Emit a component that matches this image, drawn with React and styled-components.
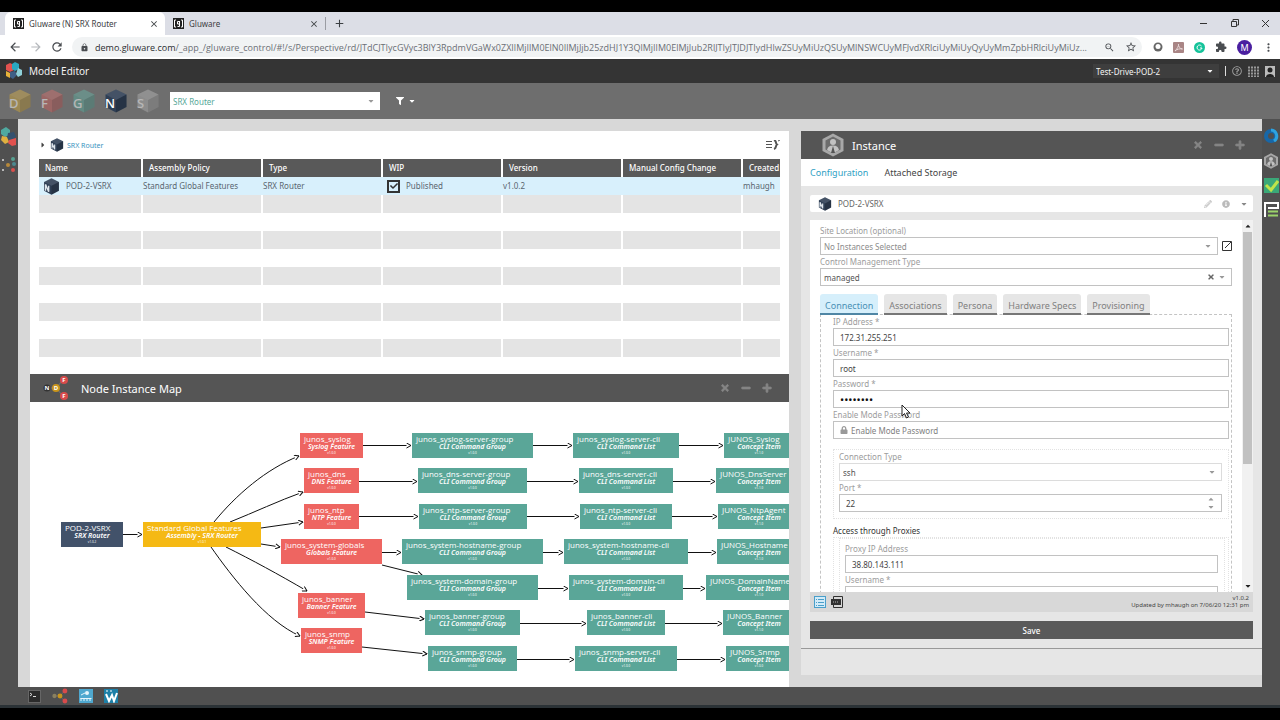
import React from 'react';
import styled, { createGlobalStyle, css } from 'styled-components';
import {
   MdArrowBack, MdArrowForward, MdRefresh, MdLock, MdZoomOut, MdStarBorder, MdMoreVert,
   MdExtension, MdClose, MdAdd,
} from 'react-icons/md';
import {
   FaFilter, FaCaretDown, FaCaretUp, FaCaretRight, FaTimes, FaMinus, FaPlus, FaLock, FaCheck,
   FaRegQuestionCircle, FaInfoCircle, FaPencilAlt,
} from 'react-icons/fa';

const colors = {
   navy: '#42526a',
   yellow: '#f5b914',
   red: '#ee6561',
   teal: '#5aa698',
   dark: '#555555',
   rail: '#505050',
   blue: '#2f9fc4',
};

const URL_PATH = '/_app_/gluware_control/#!/s/Perspective/rd/JTdCJTIycGVyc3BlY3RpdmVGaWx0ZXIlMjIlM0ElN0IlMjJjb25zdHJ1Y3QlMjIlM0ElMjJub2RlJTIyJTJDJTIydHlwZSUyMiUzQSUyMlNSWCUyMFJvdXRlciUyMiUyQyUyMmZpbHRlciUyMiUz...';

const columns = ['Name', 'Assembly Policy', 'Type', 'WIP', 'Version', 'Manual Config Change', 'Created'];

const cubes = [
   { letter: 'D', color: '#c9a23c', faded: true },
   { letter: 'F', color: '#c9605e', faded: true },
   { letter: 'G', color: '#5aa698', faded: true },
   { letter: 'N', color: '#2f3f55', faded: false },
   { letter: 'S', color: '#aaaaaa', faded: true },
];

// x and y are canvas coordinates of the node's top left corner
const nodes = [
   { x: 31, y: 120, w: 62, kind: 'navy', name: 'POD-2-VSRX', type: 'SRX Router', version: 'v1.0.2' },
   { x: 113, y: 120, w: 118, kind: 'yellow', name: 'Standard Global Features', type: 'Assembly - SRX Router', version: 'v1.0.1' },
   { x: 270, y: 31, w: 63, kind: 'red', name: 'junos_syslog', type: 'Syslog Feature' },
   { x: 274, y: 66, w: 55, kind: 'red', name: 'junos_dns', type: 'DNS Feature' },
   { x: 274, y: 102, w: 55, kind: 'red', name: 'junos_ntp', type: 'NTP Feature' },
   { x: 251, y: 137, w: 101, kind: 'red', name: 'junos_system-globals', type: 'Globals Feature' },
   { x: 268, y: 191, w: 67, kind: 'red', name: 'junos_banner', type: 'Banner Feature' },
   { x: 271, y: 226, w: 61, kind: 'red', name: 'junos_snmp', type: 'SNMP Feature' },
   { x: 382, y: 31, w: 121, kind: 'teal', name: 'junos_syslog-server-group', type: 'CLI Command Group' },
   { x: 388, y: 66, w: 109, kind: 'teal', name: 'junos_dns-server-group', type: 'CLI Command Group' },
   { x: 389, y: 102, w: 108, kind: 'teal', name: 'junos_ntp-server-group', type: 'CLI Command Group' },
   { x: 372, y: 137, w: 141, kind: 'teal', name: 'junos_system-hostname-group', type: 'CLI Command Group' },
   { x: 377, y: 173, w: 131, kind: 'teal', name: 'junos_system-domain-group', type: 'CLI Command Group' },
   { x: 395, y: 208, w: 95, kind: 'teal', name: 'junos_banner-group', type: 'CLI Command Group' },
   { x: 398, y: 244, w: 89, kind: 'teal', name: 'junos_snmp-group', type: 'CLI Command Group' },
   { x: 543, y: 31, w: 106, kind: 'teal', name: 'junos_syslog-server-cli', type: 'CLI Command List' },
   { x: 549, y: 66, w: 94, kind: 'teal', name: 'junos_dns-server-cli', type: 'CLI Command List' },
   { x: 550, y: 102, w: 92, kind: 'teal', name: 'junos_ntp-server-cli', type: 'CLI Command List' },
   { x: 534, y: 137, w: 124, kind: 'teal', name: 'junos_system-hostname-cli', type: 'CLI Command List' },
   { x: 539, y: 173, w: 114, kind: 'teal', name: 'junos_system-domain-cli', type: 'CLI Command List' },
   { x: 557, y: 208, w: 78, kind: 'teal', name: 'junos_banner-cli', type: 'CLI Command List' },
   { x: 545, y: 244, w: 102, kind: 'teal', name: 'junos_snmp-server-cli', type: 'CLI Command List' },
   { x: 694, y: 31, w: 70, kind: 'teal', name: 'JUNOS_Syslog', type: 'Concept Item', version: 'v1.1.0' },
   { x: 686, y: 66, w: 86, kind: 'teal', name: 'JUNOS_DnsServer', type: 'Concept Item', version: 'v1.1.0' },
   { x: 688, y: 102, w: 82, kind: 'teal', name: 'JUNOS_NtpAgent', type: 'Concept Item', version: 'v1.1.0' },
   { x: 687, y: 137, w: 84, kind: 'teal', name: 'JUNOS_Hostname', type: 'Concept Item', version: 'v1.1.0' },
   { x: 676, y: 173, w: 106, kind: 'teal', name: 'JUNOS_DomainName', type: 'Concept Item', version: 'v1.1.0' },
   { x: 693, y: 208, w: 72, kind: 'teal', name: 'JUNOS_Banner', type: 'Concept Item', version: 'v1.1.0' },
   { x: 696, y: 244, w: 66, kind: 'teal', name: 'JUNOS_Snmp', type: 'Concept Item', version: 'v1.0.0' },
];

const edges = [
   'M93 132.5H112',
   'M184 120C206 93 236 67 269 54',
   'M200 120C225 110 248 99 273 90',
   'M231 126L273 120',
   'M231 142L250 145',
   'M196 145C222 158 248 172 277 189',
   'M181 145C202 175 236 219 270 234',
   'M333 43.5H381', 'M329 79.5H387', 'M329 114.5H388', 'M352 150.5H371',
   'M352 163L392 173', 'M335 210L394 217', 'M332 245L397 252',
   'M503 43.5H542', 'M497 79.5H548', 'M497 114.5H549', 'M513 150.5H533', 'M508 186.5H538', 'M490 221.5H556', 'M487 257.5H544',
   'M649 43.5H693', 'M643 79.5H685', 'M642 114.5H687', 'M658 150.5H686', 'M653 186.5H675', 'M635 221.5H692', 'M647 257.5H695',
];

const Cube = ({ size = 14, color = '#2f3f55', letter }) => (
   <svg width={size} height={size} viewBox="0 0 24 24" aria-hidden="true">
      <path d="M12 0.5L22.5 5.5V18L12 23.5L1.5 18V5.5Z" fill={color} />
      <path d="M12 0.5L22.5 5.5L12 11L1.5 5.5Z" fill="#fff" opacity="0.1" />
      <path d="M12 11L22.5 5.5V18L12 23.5Z" fill="#000" opacity="0.18" />
      {letter
         ? <text x="1" y="19" fill="#fff" fontSize="13" fontWeight="500" fontFamily="Noto Sans, sans-serif">{letter}</text>
         : <path d="M3.5 18V9L8 19.5V11" stroke="#dfe6ec" strokeWidth="2" fill="none" />}
   </svg>
);

const Favicon = () => (
   <svg width="11" height="11" viewBox="0 0 11 11" aria-hidden="true">
      <rect width="11" height="11" fill="#222" />
      <path d="M3 2H1.5V9H3M8 2H9.5V9H8M6.5 3.5H4.5V6H6.5M6.5 3V8.5H4.5" stroke="#fff" fill="none" />
   </svg>
);

const Logo = ({ size = 18 }) => (
   <svg width={size} height={size} viewBox="0 0 18 18" aria-hidden="true">
      <path d="M5 1L9 3V8L5 10L1 8V3Z" fill="#e2524f" />
      <path d="M10 0L14 2V7L10 9L7 7V2Z" fill="#2aa7c0" />
      <path d="M1 9L5 11V16L1 14Z" fill="#e8b23a" />
      <path d="M5 10L10 9L12 13L8 17L5 15Z" fill="#3f5f86" />
      <path d="M13 6L17 8V13L13 15L11 12Z" fill="#8fd0d8" />
   </svg>
);

const Person = ({ size }) => (
   <svg width={size} height={size} viewBox="0 0 24 24" aria-hidden="true">
      <path d="M12 0.5L22.5 6V18L12 23.5L1.5 18V6Z" fill="#a8a8a8" />
      <path d="M12 3.5L19.5 7.5V16.5L12 20.5L4.5 16.5V7.5Z" fill="#6c6c6c" />
      <circle cx="12" cy="9" r="3" fill="#c2c2c2" />
      <path d="M6 17C7 13 10 12.5 12 12.5S17 13 18 17L12 20.5Z" fill="#c2c2c2" />
      <path d="M12 13L14 20H10Z" fill="#555" />
   </svg>
);

const MapIcon = ({ size = 24, letters }) => (
   <svg width={size} height={size} viewBox="0 0 26 26" aria-hidden="true">
      <path d="M4 13H13L20 5M13 13L20 21" stroke="#777" fill="none" />
      <circle cx="4" cy="13" r="3.5" fill={letters ? '#333' : '#8a8060'} />
      <circle cx="13" cy="13" r="4" fill="#c8941c" />
      <circle cx="21" cy="5" r="4" fill="#d84b4b" />
      <circle cx="21" cy="21" r="4" fill="#d84b4b" />
      {letters && (
         <g fill="#fff" fontSize="6" fontWeight="700" fontFamily="Noto Sans, sans-serif" textAnchor="middle">
            <text x="4" y="15">N</text>
            <text x="13" y="15">D</text>
            <text x="21" y="7">F</text>
            <text x="21" y="23">F</text>
         </g>
      )}
   </svg>
);

const WindowButtons = () => (
   <PanelActions>
      <BareButton aria-label="Close"><FaTimes /></BareButton>
      <BareButton aria-label="Collapse"><FaMinus /></BareButton>
      <BareButton aria-label="Expand"><FaPlus /></BareButton>
   </PanelActions>
);

const Field = ({ id, label, value, type = 'text', children }) => (
   <FieldWrapper>
      <FieldLabel htmlFor={id}>{label}</FieldLabel>
      <Control $indent>
         {children || <TextInput id={id} type={type} defaultValue={value} />}
      </Control>
   </FieldWrapper>
);

const Browser = () => (
   <>
      <TabStrip>
         <BrowserTab $active>
            <Favicon />
            <TabTitle>Gluware (N) SRX Router</TabTitle>
            <BareButton aria-label="Close tab"><MdClose size={10} /></BareButton>
         </BrowserTab>
         <BrowserTab>
            <Favicon />
            <TabTitle>Gluware</TabTitle>
            <BareButton aria-label="Close tab"><MdClose size={10} /></BareButton>
         </BrowserTab>
         <NewTab aria-label="New tab"><MdAdd size={13} /></NewTab>
         <WindowControls>
            <BareButton aria-label="Minimize">
               <svg width="9" height="9"><path d="M1 4.5H8" stroke="#333" /></svg>
            </BareButton>
            <BareButton aria-label="Restore">
               <svg width="9" height="9" fill="none" stroke="#333"><path d="M1.5 2.5H6.5V7.5H1.5ZM3 2V0.5H8.5V6H7" /></svg>
            </BareButton>
            <BareButton aria-label="Close">
               <svg width="9" height="9"><path d="M1 1L8 8M8 1L1 8" stroke="#333" /></svg>
            </BareButton>
         </WindowControls>
      </TabStrip>
      <AddressRow>
         <BareButton aria-label="Back"><MdArrowBack size={14} /></BareButton>
         <BareButton aria-label="Forward"><MdArrowForward size={14} color="#b5b8bc" /></BareButton>
         <BareButton aria-label="Reload"><MdRefresh size={14} /></BareButton>
         <AddressBar>
            <MdLock size={9} />
            <Address><b>demo.gluware.com</b>{URL_PATH}</Address>
            <MdZoomOut size={11} />
            <MdStarBorder size={12} />
         </AddressBar>
         <Extensions>
            <svg width="10" height="10"><circle cx="5" cy="5" r="4.5" fill="#666" /><circle cx="5" cy="4.5" r="2.5" fill="#fff" /></svg>
            <svg width="11" height="11"><rect width="11" height="11" rx="1" fill="#a98585" /><path d="M2 9C4 7 6 4 5.5 2C5 4 7 7 9.5 7C7 6.5 4 7 2 9Z" stroke="#e9dada" fill="none" /></svg>
            <svg width="11" height="11"><circle cx="5.5" cy="5.5" r="5.5" fill="#15c39a" /><path d="M7.5 4A2.5 2.5 0 1 0 8 6H6" stroke="#fff" fill="none" /></svg>
            <MdExtension size={12} />
            <Avatar>M</Avatar>
            <MdMoreVert size={13} />
         </Extensions>
      </AddressRow>
   </>
);

const AppBar = () => (
   <>
      <Header>
         <Logo />
         <AppTitle>Model Editor</AppTitle>
         <PodPicker>
            <select aria-label="Organization" defaultValue="Test-Drive-POD-2"><option>Test-Drive-POD-2</option></select>
            <FaCaretDown />
         </PodPicker>
         <HeaderDivider />
         <FaRegQuestionCircle size={10} color="#999" />
         <svg width="11" height="11"><path d="M0 1.5H11M0 4.5H11M0 7.5H11M0 10.5H11" stroke="#999" strokeWidth="2" strokeDasharray="2 1" /></svg>
         <svg width="10" height="11"><rect width="10" height="11" fill="#bbb" /><circle cx="5" cy="4" r="2.5" fill="#222" /><path d="M1 11C1 7 9 7 9 11Z" fill="#222" /></svg>
      </Header>
      <Toolbar>
         {cubes.map((cube) => (
            <CubeButton key={cube.letter} aria-label={`Filter ${cube.letter}`} $faded={cube.faded}>
               <Cube size={24} color={cube.color} letter={cube.letter} />
            </CubeButton>
         ))}
         <TypePicker>
            <select aria-label="Type" defaultValue="SRX Router"><option>SRX Router</option></select>
            <FaCaretDown />
         </TypePicker>
         <FilterButton aria-label="Filter"><FaFilter /><FaCaretDown /></FilterButton>
      </Toolbar>
   </>
);

const Instances = () => (
   <TablePanel>
      <Crumb>
         <FaCaretRight size={8} color="#444" />
         <Cube size={14} />
         <a href="#srx">SRX Router</a>
         <BareButton aria-label="Table options">
            <svg width="14" height="10" fill="none" stroke="#555"><path d="M0 1.5H6M0 4.5H6M0 7.5H6" /><path d="M8 0C11 1 9 3 11 4.5C9 6 11 8 8 9" strokeWidth="2" /><path d="M12 1L14 0" /></svg>
         </BareButton>
      </Crumb>
      <TableClip>
         <Table>
            <colgroup>
               <NameCol />
               <col span="6" />
            </colgroup>
            <thead>
               <tr>{columns.map((name) => <th key={name}>{name}</th>)}</tr>
            </thead>
            <tbody>
               <SelectedRow>
                  <td><CellInner><Cube size={17} />POD-2-VSRX</CellInner></td>
                  <td>Standard Global Features</td>
                  <td>SRX Router</td>
                  <td>
                     <CellInner>
                        <TickBox>
                           <input type="checkbox" aria-label="Published" defaultChecked />
                           <FaCheck />
                        </TickBox>
                        Published
                     </CellInner>
                  </td>
                  <td>v1.0.2</td>
                  <td />
                  <td>mhaugh</td>
               </SelectedRow>
               {[...Array(9)].map((_, row) => (
                  <tr key={row}>{columns.map((name) => <td key={name} />)}</tr>
               ))}
            </tbody>
         </Table>
      </TableClip>
   </TablePanel>
);

const NodeMap = () => (
   <MapPanel>
      <PanelHeader>
         <MapIcon size={26} letters />
         <PanelTitle>Node Instance Map</PanelTitle>
         <WindowButtons />
      </PanelHeader>
      <Canvas>
         <Edges aria-hidden="true">
            <defs>
               <marker id="head" viewBox="0 0 6 6" refX="5.5" refY="3" markerWidth="6" markerHeight="6" markerUnits="userSpaceOnUse" orient="auto">
                  <path d="M1 0.5L5.5 3L1 5.5" fill="#fff" stroke="#111" />
               </marker>
            </defs>
            {edges.map((d) => <path key={d} d={d} markerEnd="url(#head)" />)}
         </Edges>
         {nodes.map((node) => (
            <Node key={node.name} $x={node.x} $y={node.y} $w={node.w} $kind={node.kind}>
               <NodeName>{node.name}</NodeName>
               <NodeType>{node.type}</NodeType>
               <NodeVersion>{node.version || 'v1.0.0'}</NodeVersion>
            </Node>
         ))}
      </Canvas>
   </MapPanel>
);

const InstancePanel = () => (
   <Inspector>
      <PanelHeader>
         <Person size={24} />
         <PanelTitle>Instance</PanelTitle>
         <WindowButtons />
      </PanelHeader>
      <InspectorTabs>
         <InspectorTab $active>Configuration</InspectorTab>
         <InspectorTab>Attached Storage</InspectorTab>
      </InspectorTabs>
      <InspectorBody>
         <InstanceBar>
            <Cube size={14} />
            <span>POD-2-VSRX</span>
            <FaPencilAlt color="#ccc" />
            <FaInfoCircle color="#bbb" />
            <FaCaretDown color="#888" />
         </InstanceBar>
         <FormArea>
            <Form>
               <FieldLabel htmlFor="site">Site Location (optional)</FieldLabel>
               <SiteRow>
                  <Control>
                     <SelectInput id="site" $muted><option>No Instances Selected</option></SelectInput>
                     <FaCaretDown />
                  </Control>
                  <BareButton type="button" aria-label="Open site">
                     <svg width="10" height="10" fill="none" stroke="#333"><path d="M6 0.5H0.5V9.5H9.5V4M3 7L9 1M6 0.5H9.5V4" /></svg>
                  </BareButton>
               </SiteRow>
               <FieldLabel htmlFor="management">Control Management Type</FieldLabel>
               <Control>
                  <SelectInput id="management"><option>managed</option></SelectInput>
                  <ClearButton type="button" aria-label="Clear"><FaTimes /></ClearButton>
                  <FaCaretDown />
               </Control>
               <FormTabs>
                  <FormTab $active>Connection</FormTab>
                  <FormTab>Associations</FormTab>
                  <FormTab>Persona</FormTab>
                  <FormTab>Hardware Specs</FormTab>
                  <FormTab>Provisioning</FormTab>
               </FormTabs>
               <TabPage>
                  <Field id="ip" label="IP Address *" value="172.31.255.251" />
                  <Field id="user" label="Username *" value="root" />
                  <Field id="pass" label="Password *">
                     <TextInput id="pass" type="password" defaultValue="password" $dots />
                  </Field>
                  <FieldWrapper>
                     <FieldLabel htmlFor="enable">Enable Mode Password</FieldLabel>
                     <Pointer width="11" height="16" viewBox="0 0 11 16" aria-hidden="true">
                        <path d="M1 1V12L3.5 9.5L5.5 14L7.5 13L5.5 9H9Z" fill="#fff" stroke="#222" />
                     </Pointer>
                     <Control $indent>
                        <FaLock />
                        <TextInput id="enable" type="password" placeholder="Enable Mode Password" />
                     </Control>
                  </FieldWrapper>
                  <Group>
                     <FieldLabel htmlFor="conn">Connection Type</FieldLabel>
                     <Control $light>
                        <SelectInput id="conn"><option>ssh</option></SelectInput>
                        <FaCaretDown />
                     </Control>
                     <Field id="port" label="Port *">
                        <TextInput id="port" type="number" defaultValue="22" />
                        <Spinner><FaCaretUp /><FaCaretDown /></Spinner>
                     </Field>
                  </Group>
                  <GroupTitle>Access through Proxies</GroupTitle>
                  <Group $nested>
                     <Group $inner>
                        <Field id="proxy-ip" label="Proxy IP Address" value="38.80.143.111" />
                        <Field id="proxy-user" label="Username *" value="proxyuser" />
                     </Group>
                  </Group>
               </TabPage>
            </Form>
            <Scrollbar aria-hidden="true">
               <FaCaretUp />
               <Thumb />
               <FaCaretDown />
            </Scrollbar>
         </FormArea>
         <FormFooter>
            <BareButton aria-label="Form view">
               <svg width="12" height="12" fill="#d3ebf8" stroke="#4a9fca"><rect x="0.5" y="0.5" width="11" height="11" /><path d="M2 3.5H10M2 6.5H10M2 9.5H10" strokeDasharray="1 1 6" /></svg>
            </BareButton>
            <BareButton aria-label="JSON view">
               <svg width="12" height="12"><path d="M2.5 3V0.5H11.5V11.5H2.5V9" fill="none" stroke="#333" /><rect y="3" width="10" height="6" fill="#333" /><path d="M2 6H8" stroke="#bbb" strokeDasharray="1 1" /></svg>
            </BareButton>
            <Updated>v1.0.2<br />Updated by mhaugh on 7/06/20 12:31 pm</Updated>
         </FormFooter>
         <SaveButton>Save</SaveButton>
      </InspectorBody>
      <InspectorEnd />
   </Inspector>
);

const App = () => (
   <Page>
      <GlobalStyle />
      <Browser />
      <AppBar />
      <Workspace>
         <Rail>
            <svg width="18" height="20" aria-hidden="true"><path d="M1 3L6 0L10 3V8L5 10L1 7Z" fill="#4fa9a0" /><path d="M8 6L14 5L16 10L11 13L7 11Z" fill="#34506e" /><path d="M2 9L7 10L9 15L5 17L1 13Z" fill="#e0b040" /><path d="M9 13L16 11V18L12 19L8 16Z" fill="#e2524f" /></svg>
            <svg width="18" height="18" aria-hidden="true"><circle cx="3" cy="4" r="1" fill="#ddd" /><circle cx="3" cy="14" r="1" fill="#ddd" /><circle cx="8" cy="9" r="2" fill="#b8893a" /><circle cx="13" cy="3" r="2" fill="#56a090" /><circle cx="14" cy="8" r="2" fill="#4d8a90" /><circle cx="13" cy="14" r="2" fill="#d8504d" /></svg>
         </Rail>
         <Main>
            <LeftColumn>
               <Instances />
               <NodeMap />
            </LeftColumn>
            <InstancePanel />
         </Main>
         <Rail $right>
            <svg width="16" height="16"><circle cx="8" cy="8" r="5" fill="none" stroke="#1767a8" strokeWidth="4" /><path d="M8 2A6 6 0 0 1 11 13" fill="none" stroke="#2ea3e0" strokeWidth="3" /></svg>
            <Person size={16} />
            <svg width="15" height="15"><rect width="15" height="15" fill="#3aa878" /><path d="M2 7L7 12L14 3" stroke="#bfe34a" strokeWidth="3" fill="none" /></svg>
            <svg width="15" height="15" fill="none" strokeWidth="2"><path d="M1 15V1H14V6H4" stroke="#fff" /><path d="M4 9.5H14M4 13.5H14" stroke="#9bd36a" /></svg>
         </Rail>
      </Workspace>
      <Dock>
         <svg width="13" height="13"><rect x="0.5" y="0.5" width="12" height="12" fill="#2b2b2b" stroke="#666" /><path d="M2 3L4 4.5L2 6M5 6.5H8" stroke="#ddd" fill="none" /></svg>
         <MapIcon size={16} />
         <svg width="14" height="14"><rect width="14" height="14" fill="#4fa8cf" /><circle cx="8" cy="4" r="2" fill="#e6f5fc" /><path d="M2 6L6 4M1.5 9.5H12.5M2 12V9M5 12V9M8 12V9M11 12V9" stroke="#e6f5fc" /></svg>
         <svg width="14" height="14"><rect width="14" height="14" fill="#1d80a8" /><path d="M2 5L5 12L8 6L10 12L13 4" stroke="#fff" strokeWidth="2" fill="none" /><path d="M2 2H4M6 2H8" stroke="#fff" /></svg>
      </Dock>
      <TaskEdge />
   </Page>
);

export default App;


const GlobalStyle = createGlobalStyle`
   * { box-sizing: border-box; }
   body {
      margin: 0;
      background: #000;
      color: #444;
      font-family: "Noto Sans", "Open Sans", sans-serif;
      font-size: 8px;
   }
   button, input, select { font: inherit; color: inherit; }
   svg { display: block; flex: none; }
   a { color: inherit; text-decoration: none; }
`;

const Page = styled.div`
   height: 100vh;
   padding: 12px 0;
   display: flex;
   flex-direction: column;
   background: #000;
   overflow: hidden;
`;

const BareButton = styled.button`
   padding: 0;
   border: 0;
   background: none;
   display: flex;
   align-items: center;
   justify-content: center;
`;

const bareSelect = css`
   select {
      flex: 1;
      min-width: 0;
      padding: 0;
      border: 0;
      outline: 0;
      appearance: none;
      background: none;
   }
`;

const TabStrip = styled.div`
   flex: none;
   height: 23px;
   padding-left: 5px;
   display: flex;
   align-items: stretch;
   background: #dcdee6;
   color: #3c4043;
`;

const BrowserTab = styled.div`
   width: 160px;
   padding: 0 6px 0 8px;
   display: flex;
   align-items: center;
   gap: 5px;
   border-radius: 6px 6px 0 0;
   background: ${(props) => (props.$active ? '#fff' : 'transparent')};
`;

const TabTitle = styled.span`
   flex: 1;
`;

const NewTab = styled(BareButton)`
   width: 28px;
   margin: 5px 0;
   border-left: 1px solid #9a9ca3;
`;

const WindowControls = styled.div`
   margin-left: auto;
   padding-right: 10px;
   display: flex;
   gap: 22px;
`;

const AddressRow = styled.div`
   flex: none;
   height: 24px;
   padding: 0 5px 0 8px;
   display: flex;
   align-items: center;
   gap: 7px;
   background: #fff;
   color: #4a4d51;
`;

const AddressBar = styled.div`
   flex: 1;
   min-width: 0;
   height: 20px;
   margin-left: 1px;
   padding: 0 5px 0 8px;
   display: flex;
   align-items: center;
   gap: 10px;
   border-radius: 10px;
   background: #f1f3f4;
`;

const Address = styled.span`
   flex: 1;
   margin-left: -4px;
   overflow: hidden;
   white-space: nowrap;
   font-family: "Open Sans", "Noto Sans", sans-serif;
   font-size: 9px;
   color: #6b6f74;

   b {
      font-weight: 400;
      color: #2b2d30;
   }
`;

const Extensions = styled.div`
   padding-left: 4px;
   display: flex;
   align-items: center;
   gap: 10px;
`;

const Avatar = styled.span`
   width: 15px;
   height: 15px;
   border-radius: 50%;
   background: #4a1fa0;
   color: #fff;
   font-size: 9px;
   line-height: 15px;
   text-align: center;
`;

const Header = styled.header`
   flex: none;
   height: 24px;
   padding: 0 5px;
   display: flex;
   align-items: center;
   gap: 6px;
   background: #343434;
`;

const AppTitle = styled.h1`
   flex: 1;
   margin: 0;
   font-size: 10px;
   font-weight: 400;
   color: #f2f2f2;
`;

const PodPicker = styled.div`
   width: 126px;
   height: 14px;
   padding: 0 5px 0 3px;
   display: flex;
   align-items: center;
   background: #3e3e3e;
   color: #f4f4f4;
   ${bareSelect}
`;

const HeaderDivider = styled.span`
   width: 1px;
   height: 10px;
   background: #ddd;
`;

const Toolbar = styled.div`
   flex: none;
   height: 36px;
   padding: 0 8px;
   display: flex;
   align-items: center;
   gap: 8px;
   background: #6e6e6e;
`;

const CubeButton = styled(BareButton)`
   opacity: ${(props) => (props.$faded ? 0.5 : 1)};
`;

const TypePicker = styled.div`
   width: 210px;
   height: 18px;
   margin-left: 2px;
   padding: 0 5px 0 3px;
   display: flex;
   align-items: center;
   background: #fff;
   color: #999;
   ${bareSelect}

   select {
      color: #56a798;
   }
`;

const FilterButton = styled(BareButton)`
   margin-left: 8px;
   gap: 4px;
   color: #fff;
`;

const Workspace = styled.div`
   flex: 1;
   min-height: 0;
   display: flex;
`;

const Rail = styled.nav`
   flex: none;
   width: 18px;
   padding-top: ${(props) => (props.$right ? 9 : 8)}px;
   display: flex;
   flex-direction: column;
   align-items: center;
   gap: 9px;
   background: ${colors.rail};
`;

const Main = styled.main`
   flex: 1;
   min-width: 0;
   padding: 12px 0 0 12px;
   display: flex;
   gap: 12px;
   background: #d8d8d8;
`;

const LeftColumn = styled.div`
   flex: 1;
   min-width: 0;
   display: flex;
   flex-direction: column;
   background: #fff;
`;

const TablePanel = styled.section`
   padding: 0 9px 17px;
`;

const Crumb = styled.div`
   height: 28px;
   display: flex;
   align-items: center;
   gap: 3px;
   font-size: 7px;
   color: #3a94c0;

   button {
      margin-left: auto;
   }
`;

const TableClip = styled.div`
   overflow: hidden;
`;

const Table = styled.table`
   width: 824px;
   table-layout: fixed;
   border-spacing: 0;
   white-space: nowrap;

   th, td {
      height: 18px;
      padding: 0;
      border-right: 2px solid #fff;
      line-height: 12px;
      text-align: left;
   }

   th {
      padding-left: 6px;
      background: #595959;
      color: #fff;
      font-weight: 500;
   }

   tbody tr:nth-child(even) td {
      background: #e4e4e4;
   }
`;

const NameCol = styled.col`
   width: 104px;
`;

const SelectedRow = styled.tr`
   td {
      height: 18px;
      border-color: #d8f0fc;
      background: #d8f0fc;
      color: #5a6670;
   }
`;

const CellInner = styled.div`
   padding-left: 4px;
   display: flex;
   align-items: center;
   gap: 6px;
`;

const TickBox = styled.span`
   display: grid;
   place-items: center;

   > * {
      grid-area: 1 / 1;
   }

   input {
      width: 13px;
      height: 13px;
      margin: 0;
      appearance: none;
      border: 2px solid #333;
   }

   svg {
      color: #333;
      pointer-events: none;
   }
`;

const MapPanel = styled.section`
   flex: 1;
   min-height: 0;
   display: flex;
   flex-direction: column;
`;

const PanelHeader = styled.div`
   flex: none;
   height: 28px;
   padding: 0 17px 0 13px;
   display: flex;
   align-items: center;
   gap: 12px;
   background: ${colors.dark};
`;

const PanelTitle = styled.h2`
   flex: 1;
   margin: 0;
   font-size: 11px;
   font-weight: 400;
   color: #fff;
`;

const PanelActions = styled.div`
   display: flex;
   gap: 11px;
   color: #858585;

   svg {
      width: 10px;
      height: 10px;
      overflow: visible;
      stroke: currentColor;
      stroke-width: 40px;
   }
`;

const Canvas = styled.div`
   flex: 1;
   min-height: 0;
   position: relative;
   overflow: hidden;
`;

const Edges = styled.svg`
   position: absolute;
   inset: 0;
   width: 100%;
   height: 100%;
   fill: none;
   stroke: #111;
`;

const Node = styled.div`
   position: absolute;
   left: ${(props) => props.$x}px;
   top: ${(props) => props.$y}px;
   width: ${(props) => props.$w}px;
   height: 25px;
   padding: 1px 4px;
   background: ${(props) => colors[props.$kind]};
   color: #fff;
   white-space: nowrap;
`;

const NodeName = styled.div`
   font-family: "Open Sans", "Noto Sans", sans-serif;
   font-size: 8px;
   line-height: 9px;
`;

const NodeType = styled.div`
   font-size: 7px;
   font-style: italic;
   font-weight: 600;
   line-height: 8px;
   text-align: center;
`;

const NodeVersion = styled.div`
   font-size: 3px;
   line-height: 4px;
   text-align: center;
`;

const Inspector = styled.section`
   flex: none;
   width: 38%;
   min-width: 400px;
   max-width: 461px;
   margin-bottom: 12px;
   display: flex;
   flex-direction: column;
   background: #e6e6e6;

   ${PanelHeader} {
      padding: 0 17px 0 20px;
      gap: 7px;
   }
`;

const InspectorTabs = styled.div`
   flex: none;
   height: 27px;
   padding: 0 9px;
   display: flex;
   gap: 16px;
   background: #fff;
`;

const InspectorTab = styled(BareButton)`
   font-size: 9px;
   color: ${(props) => (props.$active ? colors.blue : '#444')};
`;

const InspectorBody = styled.div`
   flex: 1;
   min-height: 0;
   padding: 9px;
   display: flex;
   flex-direction: column;
`;

const InstanceBar = styled.div`
   flex: none;
   height: 17px;
   padding: 0 5px 0 8px;
   display: flex;
   align-items: center;
   gap: 10px;
   border-radius: 2px;
   background: #fff;
   color: #666;

   span {
      flex: 1;
      margin-left: -4px;
   }
`;

const FormArea = styled.div`
   flex: 1;
   min-height: 0;
   margin-top: 8px;
   display: flex;
   background: #fff;
`;

const Form = styled.form`
   flex: 1;
   min-width: 0;
   padding: 4px 10px 0;
   overflow: hidden;
`;

const FieldLabel = styled.label`
   display: block;
   line-height: 13px;
   color: #9c9c9c;
`;

const FieldWrapper = styled.div`
   position: relative;
`;

const Control = styled.div`
   flex: 1;
   height: 18px;
   padding: ${(props) => (props.$indent ? '0 6px' : '0 5px 0 3px')};
   display: flex;
   align-items: center;
   gap: 3px;
   border: 1px solid ${(props) => (props.$light ? '#dcdcdc' : '#c2c2c2')};
   background: #fff;
   color: #999;
`;

const TextInput = styled.input`
   flex: 1;
   min-width: 0;
   padding: 0;
   border: 0;
   outline: 0;
   background: none;
   color: ${(props) => (props.$dots ? '#111' : '#444')};
   appearance: textfield;

   ${(props) => props.$dots && css`
      font-size: 11px;
   `}

   &::-webkit-inner-spin-button {
      appearance: none;
   }

   &::placeholder {
      color: #808080;
      opacity: 1;
   }
`;

const SelectInput = styled.select`
   flex: 1;
   min-width: 0;
   padding: 0;
   border: 0;
   outline: 0;
   appearance: none;
   background: none;
   color: ${(props) => (props.$muted ? '#8c8c8c' : '#555')};
`;

const SiteRow = styled.div`
   display: flex;
   gap: 4px;
`;

const ClearButton = styled(BareButton)`
   color: #666;
`;

const FormTabs = styled.div`
   margin-top: 8px;
   display: flex;
   gap: 6px;
`;

const FormTab = styled(BareButton).attrs({ type: 'button' })`
   height: 21px;
   padding: 3px 5px 0;
   border-bottom: 2px solid ${(props) => (props.$active ? '#4f86a5' : '#777')};
   border-radius: 3px 3px 0 0;
   background: ${(props) => (props.$active ? '#d6effb' : '#e6e6e6')};
   color: ${(props) => (props.$active ? '#4a8fb5' : '#808080')};
   font-size: 9px;
`;

const TabPage = styled.div`
   margin-top: -1px;
   padding: 0 2px 0 12px;
   border: 1px dashed #c4c4c4;
`;

const Group = styled.div`
   margin-top: ${(props) => (props.$nested || props.$inner ? 0 : 10)}px;
   padding: ${(props) => (props.$nested ? '0 3px 6px 5px' : '0 6px 6px 5px')};
   border: 1px dotted #e2e2e2;

   ${(props) => props.$inner && css`
      padding-top: 3px;
   `}
`;

const GroupTitle = styled.div`
   margin-top: 5px;
   line-height: 13px;
   color: #333;
`;

const Spinner = styled.span`
   display: flex;
   flex-direction: column;
`;

const Pointer = styled.svg`
   position: absolute;
   left: 68px;
   top: -4px;
`;

const Scrollbar = styled.div`
   width: 11px;
   padding: 2px 1px;
   display: flex;
   flex-direction: column;
   align-items: center;
   gap: 2px;
   background: #f1f1f1;
   color: #222;
`;

const Thumb = styled.div`
   width: 9px;
   height: 63%;
   margin-bottom: auto;
   background: #c1c1c1;
`;

const FormFooter = styled.div`
   flex: none;
   height: 20px;
   padding: 0 4px;
   display: flex;
   align-items: center;
   gap: 5px;
   background: #d8d8d8;
`;

const Updated = styled.div`
   margin-left: auto;
   font-size: 6px;
   line-height: 7px;
   text-align: right;
`;

const SaveButton = styled(BareButton)`
   flex: none;
   height: 18px;
   margin-top: 9px;
   background: #5a5a5a;
   color: #fff;
   font-weight: 500;
`;

const InspectorEnd = styled.div`
   flex: none;
   height: 27px;
   border-top: 1px solid #999;
`;

const Dock = styled.footer`
   flex: none;
   height: 18px;
   padding: 0 28px;
   display: flex;
   align-items: center;
   gap: 11px;
   background: ${colors.rail};
`;

const TaskEdge = styled.div`
   flex: none;
   height: 3px;
   background: #2b3236;
`;
